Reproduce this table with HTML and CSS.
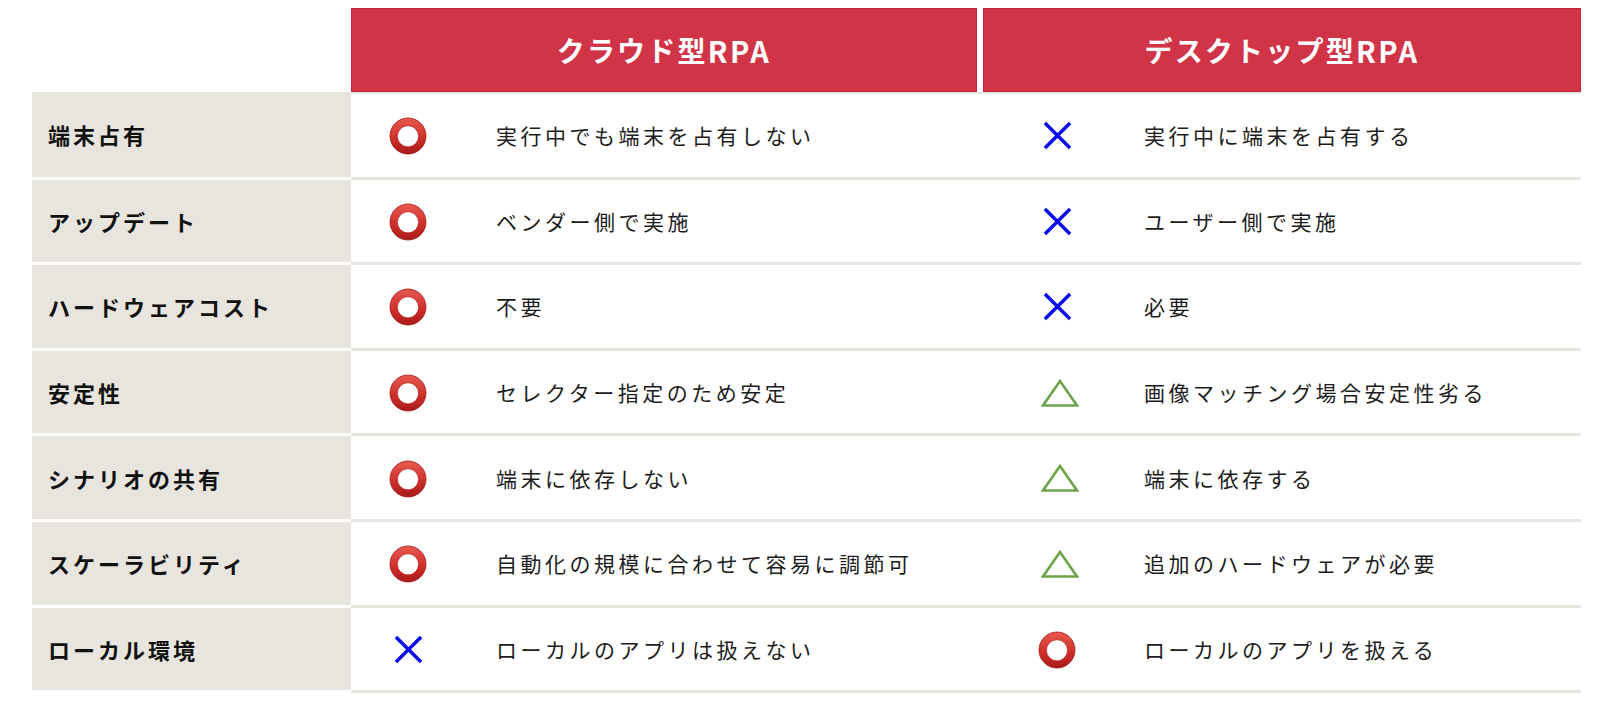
FILE: index.html
```html
<!DOCTYPE html>
<html lang="ja">
<head>
<meta charset="utf-8">
<title>クラウド型RPA vs デスクトップ型RPA</title>
<link rel="stylesheet" href="styles.css">
</head>
<body>
<svg class="defs" width="0" height="0" aria-hidden="true">
  <defs>
    <linearGradient id="ringGrad" x1="0" y1="0" x2="0" y2="1">
      <stop offset="0" stop-color="#e8594f"/>
      <stop offset="0.55" stop-color="#d0302a"/>
      <stop offset="1" stop-color="#a8191a"/>
    </linearGradient>
    <symbol id="i-circle" viewBox="0 0 38 38">
      <circle cx="19" cy="19" r="18" fill="url(#ringGrad)"/>
      <circle cx="19" cy="19" r="18" fill="none" stroke="#9e1c18" stroke-width="0.8"/>
      <circle cx="19" cy="19.3" r="10.6" fill="#ffffff"/>
      <circle cx="19" cy="19.3" r="10.6" fill="none" stroke="#b92a24" stroke-width="0.8"/>
    </symbol>
    <symbol id="i-cross" viewBox="0 0 30 30">
      <path d="M2 2 L28 28 M28 2 L2 28" stroke="#0a0af2" stroke-width="3.6" fill="none"/>
    </symbol>
    <symbol id="i-tri" viewBox="0 0 38 28">
      <polygon points="19,2 36,26.5 2,26.5" fill="none" stroke="#6ca24a" stroke-width="2.6" stroke-linejoin="miter"/>
    </symbol>
  </defs>
</svg>

<div class="table">
  <div class="head">
    <div class="corner"></div>
    <div class="th">クラウド型<span class="latin">RPA</span></div>
    <div class="th th2">デスクトップ型<span class="latin">RPA</span></div>
  </div>

  <div class="row first">
    <div class="label">端末占有</div>
    <div class="icon"><svg class="ic-circle"><use href="#i-circle"/></svg></div>
    <div class="text t1">実行中でも端末を占有しない</div>
    <div class="icon"><svg class="ic-cross"><use href="#i-cross"/></svg></div>
    <div class="text t2">実行中に端末を占有する</div>
  </div>

  <div class="row">
    <div class="label">アップデート</div>
    <div class="icon"><svg class="ic-circle"><use href="#i-circle"/></svg></div>
    <div class="text t1">ベンダー側で実施</div>
    <div class="icon"><svg class="ic-cross"><use href="#i-cross"/></svg></div>
    <div class="text t2">ユーザー側で実施</div>
  </div>

  <div class="row">
    <div class="label">ハードウェアコスト</div>
    <div class="icon"><svg class="ic-circle"><use href="#i-circle"/></svg></div>
    <div class="text t1">不要</div>
    <div class="icon"><svg class="ic-cross"><use href="#i-cross"/></svg></div>
    <div class="text t2">必要</div>
  </div>

  <div class="row">
    <div class="label">安定性</div>
    <div class="icon"><svg class="ic-circle"><use href="#i-circle"/></svg></div>
    <div class="text t1">セレクター指定のため安定</div>
    <div class="icon"><svg class="ic-tri"><use href="#i-tri"/></svg></div>
    <div class="text t2">画像マッチング場合安定性劣る</div>
  </div>

  <div class="row">
    <div class="label">シナリオの共有</div>
    <div class="icon"><svg class="ic-circle"><use href="#i-circle"/></svg></div>
    <div class="text t1">端末に依存しない</div>
    <div class="icon"><svg class="ic-tri"><use href="#i-tri"/></svg></div>
    <div class="text t2">端末に依存する</div>
  </div>

  <div class="row">
    <div class="label">スケーラビリティ</div>
    <div class="icon"><svg class="ic-circle"><use href="#i-circle"/></svg></div>
    <div class="text t1">自動化の規模に合わせて容易に調節可</div>
    <div class="icon"><svg class="ic-tri"><use href="#i-tri"/></svg></div>
    <div class="text t2">追加のハードウェアが必要</div>
  </div>

  <div class="row">
    <div class="label">ローカル環境</div>
    <div class="icon"><svg class="ic-cross"><use href="#i-cross"/></svg></div>
    <div class="text t1">ローカルのアプリは扱えない</div>
    <div class="icon"><svg class="ic-circle"><use href="#i-circle"/></svg></div>
    <div class="text t2">ローカルのアプリを扱える</div>
  </div>
</div>
</body>
</html>
```

FILE: styles.css
```css
html, body {
  margin: 0;
  padding: 0;
  background: #ffffff;
}

body {
  font-family: "Noto Sans CJK JP", "Noto Sans", sans-serif;
  color: #1c1c1c;
}

.defs {
  position: absolute;
  width: 0;
  height: 0;
  overflow: hidden;
}

.table {
  margin: 7.5px 0 0 32px;
  width: 1549px;
}

.head {
  display: grid;
  grid-template-columns: 319px 626px 604px;
}

.th {
  background: #d23447;
  border: 1px solid #c4233a;
  height: 82.5px;
  display: flex;
  align-items: center;
  justify-content: center;
  color: #ffffff;
  font-weight: 700;
  font-size: 28px;
  letter-spacing: 2.2px;
}

.th2 {
  margin-left: 6px;
}

.latin {
  letter-spacing: 2.5px;
  font-size: 29px;
}

.row {
  display: grid;
  grid-template-columns: 319px 114px 518px 148px 450px;
}

.label {
  background: #e8e5df;
  border-bottom: 3px solid #ffffff;
  padding-left: 16px;
  display: flex;
  align-items: center;
  font-weight: 700;
  font-size: 22px;
  letter-spacing: 3px;
  color: #111111;
}

.icon,
.text {
  height: 82.6px;
  border-bottom: 3px solid #e8e5df;
  display: flex;
  align-items: center;
}

.row.first .icon,
.row.first .text {
  border-top: 2.6px solid #e8e5df;
}

.icon {
  justify-content: center;
}

.text {
  font-size: 21px;
  letter-spacing: 3.5px;
}

.t1 {
  padding-left: 31px;
}

.t2 {
  padding-left: 13px;
}

.ic-circle {
  width: 38px;
  height: 38px;
  margin-top: 2px;
}

.ic-cross {
  width: 29px;
  height: 29px;
  margin-top: 1px;
}

.ic-tri {
  width: 38px;
  height: 28px;
  margin-left: 5px;
  margin-top: 1px;
}
```
